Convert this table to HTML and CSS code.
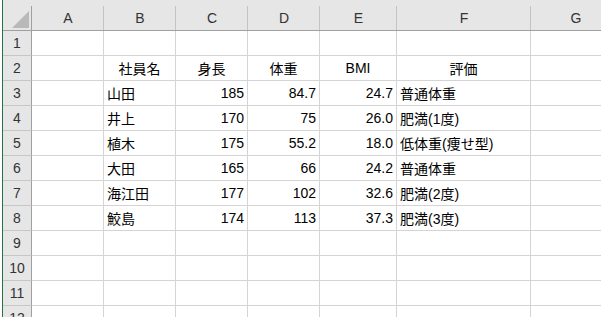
FILE: index.html
```html
<!DOCTYPE html>
<html lang="ja">
<head>
    <meta charset="UTF-8">
    <meta name="viewport" content="width=device-width, initial-scale=1.0">
    <title>BMI判定</title>
    <link rel="stylesheet" href="styles.css">
</head>
<body>
<div class="sheet">
    <div class="row head">
        <div class="corner">
            <svg width="17" height="17" viewBox="0 0 17 17"><polygon points="17,0 17,17 0,17" fill="#b9b9b9"/></svg>
        </div>
        <div class="col">A</div>
        <div class="col">B</div>
        <div class="col">C</div>
        <div class="col">D</div>
        <div class="col">E</div>
        <div class="col">F</div>
        <div class="col">G</div>
    </div>

    <div class="row">
        <div class="rh">1</div>
        <div class="cell"></div><div class="cell"></div><div class="cell"></div><div class="cell"></div>
        <div class="cell"></div><div class="cell"></div><div class="cell"></div>
    </div>
    <div class="row">
        <div class="rh">2</div>
        <div class="cell"></div>
        <div class="cell mid">社員名</div>
        <div class="cell mid">身長</div>
        <div class="cell mid">体重</div>
        <div class="cell mid">BMI</div>
        <div class="cell mid">評価</div>
        <div class="cell"></div>
    </div>
    <div class="row">
        <div class="rh">3</div>
        <div class="cell"></div>
        <div class="cell">山田</div>
        <div class="cell num">185</div>
        <div class="cell num">84.7</div>
        <div class="cell num">24.7</div>
        <div class="cell">普通体重</div>
        <div class="cell"></div>
    </div>
    <div class="row">
        <div class="rh">4</div>
        <div class="cell"></div>
        <div class="cell">井上</div>
        <div class="cell num">170</div>
        <div class="cell num">75</div>
        <div class="cell num">26.0</div>
        <div class="cell">肥満(1度)</div>
        <div class="cell"></div>
    </div>
    <div class="row">
        <div class="rh">5</div>
        <div class="cell"></div>
        <div class="cell">植木</div>
        <div class="cell num">175</div>
        <div class="cell num">55.2</div>
        <div class="cell num">18.0</div>
        <div class="cell">低体重(痩せ型)</div>
        <div class="cell"></div>
    </div>
    <div class="row">
        <div class="rh">6</div>
        <div class="cell"></div>
        <div class="cell">大田</div>
        <div class="cell num">165</div>
        <div class="cell num">66</div>
        <div class="cell num">24.2</div>
        <div class="cell">普通体重</div>
        <div class="cell"></div>
    </div>
    <div class="row">
        <div class="rh">7</div>
        <div class="cell"></div>
        <div class="cell">海江田</div>
        <div class="cell num">177</div>
        <div class="cell num">102</div>
        <div class="cell num">32.6</div>
        <div class="cell">肥満(2度)</div>
        <div class="cell"></div>
    </div>
    <div class="row">
        <div class="rh">8</div>
        <div class="cell"></div>
        <div class="cell">鮫島</div>
        <div class="cell num">174</div>
        <div class="cell num">113</div>
        <div class="cell num">37.3</div>
        <div class="cell">肥満(3度)</div>
        <div class="cell"></div>
    </div>
    <div class="row">
        <div class="rh">9</div>
        <div class="cell"></div><div class="cell"></div><div class="cell"></div><div class="cell"></div>
        <div class="cell"></div><div class="cell"></div><div class="cell"></div>
    </div>
    <div class="row">
        <div class="rh">10</div>
        <div class="cell"></div><div class="cell"></div><div class="cell"></div><div class="cell"></div>
        <div class="cell"></div><div class="cell"></div><div class="cell"></div>
    </div>
    <div class="row">
        <div class="rh">11</div>
        <div class="cell"></div><div class="cell"></div><div class="cell"></div><div class="cell"></div>
        <div class="cell"></div><div class="cell"></div><div class="cell"></div>
    </div>
    <div class="row">
        <div class="rh">12</div>
        <div class="cell"></div><div class="cell"></div><div class="cell"></div><div class="cell"></div>
        <div class="cell"></div><div class="cell"></div><div class="cell"></div>
    </div>
</div>
</body>
</html>
```

FILE: styles.css
```css
* {
    margin: 0;
    padding: 0;
    box-sizing: border-box;
}

body {
    font-family: "Liberation Sans", "Noto Sans CJK JP", sans-serif;
    font-size: 14px;
    color: #000;
    background: #fff;
    overflow: hidden;
    height: 100vh;
}

/* worksheet grid, green edge on the left like the active sheet frame */
.sheet {
    margin-left: 2px;
    border-left: 1px solid #217346;
    height: 100%;
}

.row {
    display: grid;
    grid-template-columns: 29px 72px 72px 72px 72px 77px 134px 90px;
    height: 25px;
}

.row.head {
    height: 31px;
}

.corner,
.col {
    display: flex;
    align-items: center;
    justify-content: center;
    padding-top: 6px;
    background: linear-gradient(#c3c3c3, #c3c3c3) right bottom / 1px 24px no-repeat, #e6e6e6;
    border-bottom: 1px solid #a0a0a0;
    color: #333;
}

.corner {
    align-items: flex-end;
    justify-content: flex-end;
    padding: 0 3px 2px 0;
    background: linear-gradient(#a0a0a0, #a0a0a0) right bottom / 1px 24px no-repeat, #e6e6e6;
}

.corner svg {
    display: block;
}

.rh {
    display: flex;
    align-items: center;
    justify-content: center;
    background: #e6e6e6;
    border-right: 1px solid #a0a0a0;
    border-bottom: 1px solid #c6c6c6;
    color: #333;
}

.cell {
    display: flex;
    align-items: center;
    padding: 0 3px;
    border-right: 1px solid #d4d4d4;
    border-bottom: 1px solid #d4d4d4;
    white-space: nowrap;
    overflow: hidden;
}

.cell.num {
    justify-content: flex-end;
}

.cell.mid {
    justify-content: center;
}
```
